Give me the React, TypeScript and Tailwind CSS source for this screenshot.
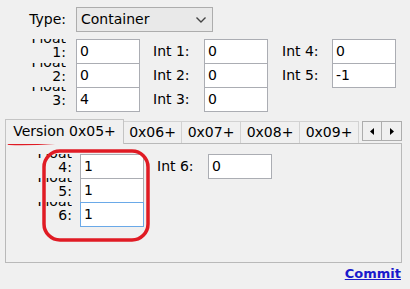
import React from 'react';

function FloatLabel({ n }: { n: number }) {
  // label wraps onto two lines; the top line ("Float") is clipped by the row
  return (
    <div className="w-[66px] h-[25px] shrink-0 overflow-hidden flex flex-col justify-end items-end text-right leading-[12px] pb-[6px]">
      <span className="leading-[15px]">Float</span>
      <span>{n}:</span>
    </div>
  );
}

function TextBox({ value, focused = false, className = '' }: { value: string; focused?: boolean; className?: string }) {
  return (
    <div
      className={`w-[64px] h-[25px] shrink-0 bg-white border flex items-center pl-[3px] ${
        focused ? 'border-[#6aa9e8] relative z-10' : 'border-[#abadb3]'
      } ${className}`}
    >
      {value}
    </div>
  );
}

function IntLabel({ text }: { text: string }) {
  return <div className="w-[51px] shrink-0">{text}</div>;
}

export default function App() {
  const tabs = [
    { label: '0x06+', w: 'w-[58px]' },
    { label: '0x07+', w: 'w-[59px]' },
    { label: '0x08+', w: 'w-[59px]' },
    { label: '0x09+', w: 'w-[59px]' },
  ];

  return (
    <div className="relative w-[410px] h-[289px] bg-[#f0f0f0] text-black text-[14px] font-['DejaVu_Sans',sans-serif] pt-[7px] overflow-hidden">
      {/* Type selector */}
      <div className="flex items-center h-[25px]">
        <div className="w-[66px] text-right">Type:</div>
        <div className="ml-[10px] w-[137px] h-[25px] bg-[#e9e9e9] border border-[#adadad] flex items-center pl-[4px] pr-[6px]">
          <span className="flex-1">Container</span>
          <svg width="10" height="6" viewBox="0 0 10 6">
            <path d="M0.5 0.5 L5 5 L9.5 0.5" fill="none" stroke="#444" strokeWidth="1.4" />
          </svg>
        </div>
      </div>

      {/* Float / Int fields */}
      <div className="mt-[7px] flex flex-col">
        <div className="flex items-center">
          <FloatLabel n={1} />
          <TextBox value="0" className="ml-[10px]" />
          <div className="ml-[13px]"><IntLabel text="Int 1:" /></div>
          <TextBox value="0" />
          <div className="ml-[14px] w-[50px] shrink-0">Int 4:</div>
          <TextBox value="0" />
        </div>
        <div className="flex items-center -mt-px">
          <FloatLabel n={2} />
          <TextBox value="0" className="ml-[10px]" />
          <div className="ml-[13px]"><IntLabel text="Int 2:" /></div>
          <TextBox value="0" />
          <div className="ml-[14px] w-[50px] shrink-0">Int 5:</div>
          <TextBox value="-1" />
        </div>
        <div className="flex items-center -mt-px">
          <FloatLabel n={3} />
          <TextBox value="4" className="ml-[10px]" />
          <div className="ml-[13px]"><IntLabel text="Int 3:" /></div>
          <TextBox value="0" />
        </div>
      </div>

      {/* Tab strip */}
      <div className="mt-[6px] ml-[5px] w-[397px] flex items-end h-[25px]">
        <div className="relative z-10 w-[119px] h-[25px] -mb-px bg-[#f0f0f0] border-t border-x border-[#c4c4c4] flex items-center justify-center pb-[1px]">
          Version 0x05+
        </div>
        {tabs.map((t) => (
          <div
            key={t.label}
            className={`${t.w} h-[22px] border-t border-r border-[#d2d2d2] bg-[#f0f0f0] flex items-center justify-center`}
          >
            {t.label}
          </div>
        ))}
        <div className="ml-auto self-center mt-[1px] flex h-[20px] border border-[#adadad] bg-[#f0f0f0]">
          <div className="w-[19px] flex items-center justify-center border-r border-[#adadad]">
            <svg width="4" height="7" viewBox="0 0 4 7"><path d="M4 0 L0 3.5 L4 7 Z" fill="#000" /></svg>
          </div>
          <div className="w-[19px] flex items-center justify-center">
            <svg width="4" height="7" viewBox="0 0 4 7"><path d="M0 0 L4 3.5 L0 7 Z" fill="#000" /></svg>
          </div>
        </div>
      </div>

      {/* Tab panel */}
      <div className="ml-[5px] w-[397px] h-[120px] border border-[#b9b9b9] bg-[#f0f0f0] pt-[10px] flex flex-col">
        <div className="flex items-center">
          <FloatLabel n={4} />
          <TextBox value="1" className="ml-[8px]" />
          <div className="ml-[13px]"><IntLabel text="Int 6:" /></div>
          <TextBox value="0" />
        </div>
        <div className="flex items-center -mt-px">
          <FloatLabel n={5} />
          <TextBox value="1" className="ml-[8px]" />
        </div>
        <div className="flex items-center -mt-px">
          <FloatLabel n={6} />
          <TextBox value="1" focused className="ml-[8px]" />
        </div>
      </div>

      {/* Commit link */}
      <div className="flex justify-end pr-[9px] mt-[3px]">
        <span className="text-[13px] font-bold text-[#1a1acc] underline leading-[16px]">Commit</span>
      </div>

      {/* red annotations drawn over the screenshot */}
      <svg className="absolute inset-0 pointer-events-none" width="410" height="289" viewBox="0 0 410 289">
        <path
          d="M9 143.5 C 25 144, 40 143.5, 55 142.5 S 95 141, 119 141"
          fill="none"
          stroke="#e01b24"
          strokeWidth="3"
          strokeLinecap="round"
        />
        <rect x="44" y="151" width="104" height="89" rx="16" fill="none" stroke="#e01b24" strokeWidth="3.5" />
      </svg>
    </div>
  );
}
